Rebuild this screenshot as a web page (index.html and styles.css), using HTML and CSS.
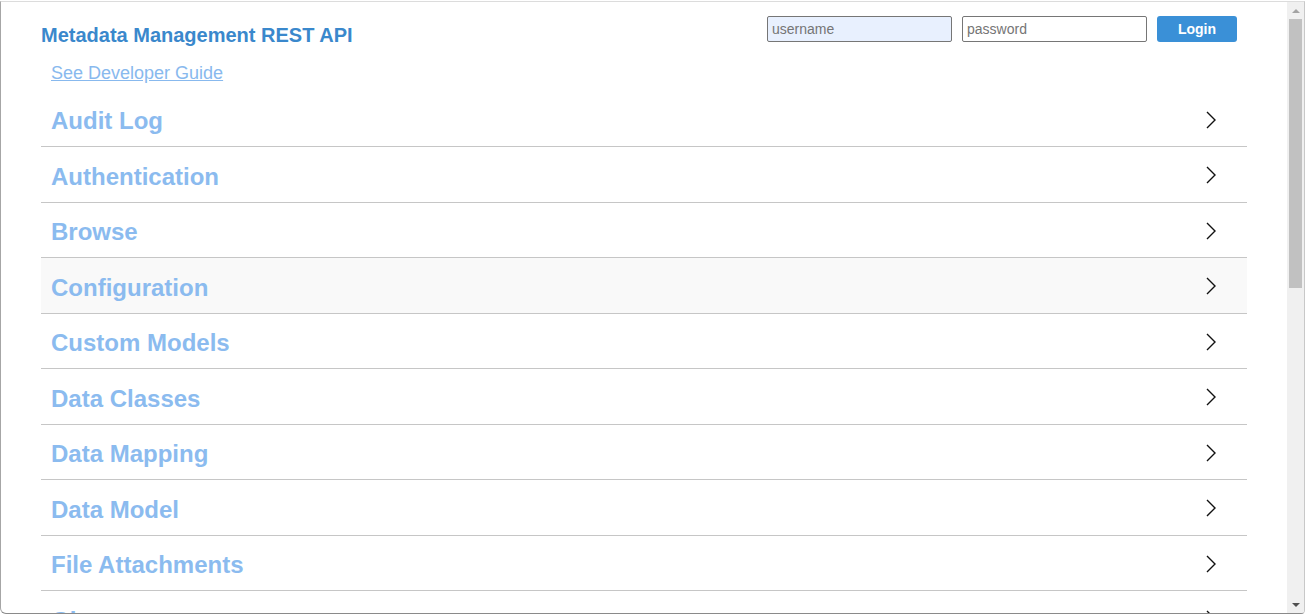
FILE: index.html
```html
<!DOCTYPE html>
<html lang="en">
<head>
    <meta charset="UTF-8">
    <title>Metadata Management REST API</title>
    <link rel="stylesheet" href="styles.css">
</head>
<body>
    <div class="frame">
        <div class="page">
            <div class="header">
                <h1>Metadata Management REST API</h1>
                <form class="login">
                    <input type="text" class="field autofill" placeholder="username">
                    <input type="password" class="field" placeholder="password">
                    <button type="button" class="login-btn">Login</button>
                </form>
            </div>
            <a class="guide" href="#">See Developer Guide</a>

            <ul class="sections">
                <li class="section"><span>Audit Log</span><svg class="chev" viewBox="0 0 12 20"><polyline points="2,2 10,10 2,18"/></svg></li>
                <li class="section"><span>Authentication</span><svg class="chev" viewBox="0 0 12 20"><polyline points="2,2 10,10 2,18"/></svg></li>
                <li class="section"><span>Browse</span><svg class="chev" viewBox="0 0 12 20"><polyline points="2,2 10,10 2,18"/></svg></li>
                <li class="section hover"><span>Configuration</span><svg class="chev" viewBox="0 0 12 20"><polyline points="2,2 10,10 2,18"/></svg></li>
                <li class="section"><span>Custom Models</span><svg class="chev" viewBox="0 0 12 20"><polyline points="2,2 10,10 2,18"/></svg></li>
                <li class="section"><span>Data Classes</span><svg class="chev" viewBox="0 0 12 20"><polyline points="2,2 10,10 2,18"/></svg></li>
                <li class="section"><span>Data Mapping</span><svg class="chev" viewBox="0 0 12 20"><polyline points="2,2 10,10 2,18"/></svg></li>
                <li class="section"><span>Data Model</span><svg class="chev" viewBox="0 0 12 20"><polyline points="2,2 10,10 2,18"/></svg></li>
                <li class="section"><span>File Attachments</span><svg class="chev" viewBox="0 0 12 20"><polyline points="2,2 10,10 2,18"/></svg></li>
                <li class="section"><span>Glossary</span><svg class="chev" viewBox="0 0 12 20"><polyline points="2,2 10,10 2,18"/></svg></li>
                <li class="section"><span>Lineage</span><svg class="chev" viewBox="0 0 12 20"><polyline points="2,2 10,10 2,18"/></svg></li>
            </ul>
        </div>

        <!-- scrollbar of the embedded frame -->
        <div class="scrollbar">
            <div class="arrow up"></div>
            <div class="track"><div class="thumb"></div></div>
            <div class="arrow down"></div>
        </div>
    </div>
</body>
</html>
```

FILE: styles.css
```css
* {
    margin: 0;
    padding: 0;
    box-sizing: border-box;
}

html, body {
    height: 100%;
    overflow: hidden;
    background: #fff;
}

body {
    font-family: "Liberation Sans", Arial, sans-serif;
    padding-top: 1px;
}

.frame {
    display: flex;
    height: 613px;
    border-top: 1px solid #dcdcdc;
    border-left: 1px solid #a6a6a6;
    border-right: 1px solid #c8c8c8;
    border-bottom: 1px solid #8a8a8a;
    border-bottom-left-radius: 6px;
    border-bottom-right-radius: 4px;
    overflow: hidden;
}

.page {
    flex: 1;
    overflow: hidden;
    padding: 0 40px;
}

.header {
    display: flex;
    justify-content: space-between;
    align-items: flex-start;
    padding: 14px 10px 0 0;
}

h1 {
    font-size: 20px;
    line-height: 23px;
    font-weight: bold;
    color: #3a88cc;
    margin-top: 8px;
}

.login {
    display: flex;
    gap: 10px;
}

.field {
    width: 185px;
    height: 26px;
    border: 1px solid #767676;
    border-radius: 2px;
    padding: 0 4px;
    font-family: inherit;
    font-size: 14px;
    color: #333;
    background: #fff;
}

.field::placeholder {
    color: #757575;
}

.field.autofill {
    background: #e8f0fe;
}

.login-btn {
    width: 80px;
    height: 26px;
    border: none;
    border-radius: 3px;
    background: #3a90d7;
    color: #fff;
    font-family: inherit;
    font-size: 14px;
    font-weight: bold;
    cursor: pointer;
}

.guide {
    display: block;
    margin: 16px 0 0 10px;
    font-size: 18px;
    line-height: 21px;
    color: #88b9ee;
    text-decoration: underline;
    width: max-content;
}

.sections {
    list-style: none;
    margin-top: 7.5px;
}

.section {
    display: flex;
    align-items: center;
    justify-content: space-between;
    height: 55.5px;
    padding: 5px 30px 0 10px;
    border-bottom: 1px solid #c6c6c6;
    font-size: 24px;
    font-weight: bold;
    color: #8bbbef;
}

.section .chev {
    margin-top: -3px;
}

.section.hover {
    background: #f9f9f9;
}

.chev {
    width: 12px;
    height: 20px;
    fill: none;
    stroke: #111;
    stroke-width: 1.4;
}

/* Scrollbar */
.scrollbar {
    width: 17px;
    display: flex;
    flex-direction: column;
    background: #f0f0f0;
}

.arrow {
    height: 17px;
    display: flex;
    align-items: center;
    justify-content: center;
}

.arrow.up::before {
    content: "";
    border-left: 4px solid transparent;
    border-right: 4px solid transparent;
    border-bottom: 4px solid #a3a3a3;
}

.arrow.down::before {
    content: "";
    border-left: 4px solid transparent;
    border-right: 4px solid transparent;
    border-top: 4px solid #505050;
}

.track {
    flex: 1;
    padding: 0 2px;
}

.thumb {
    height: 269px;
    background: #c1c1c1;
}
```
